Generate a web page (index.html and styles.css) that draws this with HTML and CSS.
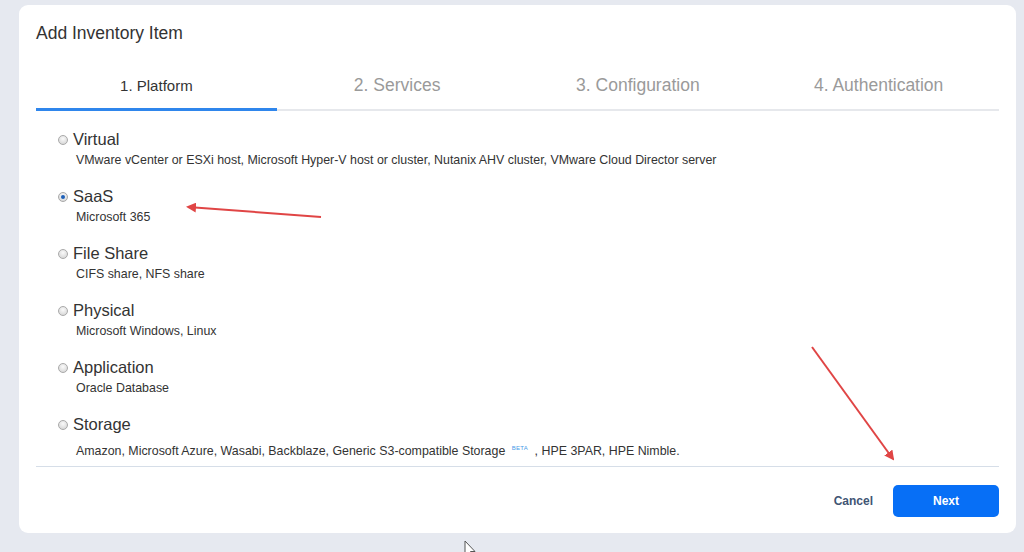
FILE: index.html
```html
<!DOCTYPE html>
<html lang="en">
<head>
    <meta charset="UTF-8">
    <title>Add Inventory Item</title>
    <link rel="stylesheet" href="styles.css">
</head>
<body>
    <div class="dialog">
        <h1 class="dialog-title">Add Inventory Item</h1>

        <div class="steps">
            <div class="step active">1. Platform</div>
            <div class="step">2. Services</div>
            <div class="step">3. Configuration</div>
            <div class="step">4. Authentication</div>
        </div>

        <div class="options">
            <div class="option">
                <div class="option-label"><span class="radio"></span>Virtual</div>
                <div class="option-desc">VMware vCenter or ESXi host, Microsoft Hyper-V host or cluster, Nutanix AHV cluster, VMware Cloud Director server</div>
            </div>
            <div class="option">
                <div class="option-label"><span class="radio checked"></span>SaaS</div>
                <div class="option-desc">Microsoft 365</div>
            </div>
            <div class="option">
                <div class="option-label"><span class="radio"></span>File Share</div>
                <div class="option-desc">CIFS share, NFS share</div>
            </div>
            <div class="option">
                <div class="option-label"><span class="radio"></span>Physical</div>
                <div class="option-desc">Microsoft Windows, Linux</div>
            </div>
            <div class="option">
                <div class="option-label"><span class="radio"></span>Application</div>
                <div class="option-desc">Oracle Database</div>
            </div>
            <div class="option">
                <div class="option-label"><span class="radio"></span>Storage</div>
                <div class="option-desc option-desc-tall">Amazon, Microsoft Azure, Wasabi, Backblaze, Generic S3-compatible Storage <sup class="beta">BETA</sup> , HPE 3PAR, HPE Nimble.</div>
            </div>
        </div>

        <div class="dialog-footer">
            <button class="btn btn-link">Cancel</button>
            <button class="btn btn-primary">Next</button>
        </div>
    </div>

    <!-- annotations drawn over the screenshot -->
    <svg class="annotations" width="1024" height="552" viewBox="0 0 1024 552">
        <defs>
            <marker id="head" viewBox="0 0 10 10" refX="8" refY="5" markerWidth="5" markerHeight="5" orient="auto">
                <path d="M0 0 L10 5 L0 10 z" fill="#e04545"/>
            </marker>
        </defs>
        <line x1="321" y1="217" x2="188" y2="207" stroke="#e04545" stroke-width="2" marker-end="url(#head)"/>
        <line x1="812" y1="347" x2="893" y2="459" stroke="#e04545" stroke-width="2" marker-end="url(#head)"/>
        <path d="M465 541 L465 556 L468.5 552.5 L471 558 L473 557 L470.5 551.5 L475 551.5 Z" fill="#fff" stroke="#555" stroke-width="1"/>
    </svg>
</body>
</html>
```

FILE: styles.css
```css
body {
    margin: 0;
    background: #e6e9f0;
    font-family: "Liberation Sans", Arial, sans-serif;
    color: #333;
    position: relative;
    height: 552px;
    overflow: hidden;
}

.dialog {
    margin: 5px 0 0 19px;
    width: 997px;
    height: 528px;
    box-sizing: border-box;
    padding: 18px 17px 0;
    background: #fff;
    border-radius: 9px;
    display: flex;
    flex-direction: column;
}

.dialog-title {
    margin: 0;
    font-size: 17.5px;
    font-weight: normal;
    line-height: 20px;
    color: #333;
}

/* Wizard steps */
.steps {
    display: flex;
    margin-top: 22px;
    border-bottom: 2px solid #e6e8ec;
}

.step {
    flex: 1;
    text-align: center;
    font-size: 17.5px;
    line-height: 20px;
    color: #9a9a9a;
    padding: 10px 0 13px;
    border-bottom: 3px solid transparent;
    margin-bottom: -2px;
}

.step.active {
    font-size: 15px;
    color: #333;
    padding-top: 11px;
    padding-bottom: 12px;
    border-bottom-color: #2f86ec;
}

/* Platform options */
.options {
    padding: 17px 0 7px 22px;
    border-bottom: 1px solid #d6dee8;
}

.option {
    margin-bottom: 17px;
}

.option:last-child {
    margin-bottom: 0;
}

.option-label {
    display: flex;
    align-items: center;
    font-size: 16.5px;
    line-height: 22px;
    color: #333;
}

.option-desc {
    margin-top: 2px;
    padding-left: 18px;
    font-size: 12.4px;
    line-height: 16px;
    color: #333;
}

.option-desc-tall {
    margin-top: 8px;
}

.beta {
    font-size: 6px;
    line-height: 0;
    color: #4a9be8;
    vertical-align: 5px;
    margin: 0 3px 0 3px;
    letter-spacing: 0.3px;
}

.radio {
    width: 10px;
    height: 10px;
    box-sizing: border-box;
    border-radius: 50%;
    border: 1px solid #a9a9a9;
    background: radial-gradient(circle at 50% 35%, #fafafa, #d0d0d0);
    margin: 1px 5px 0 0;
    flex-shrink: 0;
    position: relative;
}

.radio.checked::after {
    content: "";
    position: absolute;
    left: 2px;
    top: 2px;
    width: 4px;
    height: 4px;
    border-radius: 50%;
    background: #1d5fb7;
}

/* Footer */
.dialog-footer {
    display: flex;
    justify-content: flex-end;
    align-items: center;
    gap: 20px;
    padding-top: 18px;
}

.btn {
    font-family: inherit;
    font-size: 12px;
    font-weight: bold;
    border: none;
    cursor: pointer;
}

.btn-link {
    background: none;
    color: #3f5574;
    padding: 0;
}

.btn-primary {
    width: 106px;
    height: 32px;
    border-radius: 5px;
    background: #076ff6;
    color: #fff;
}

.annotations {
    position: absolute;
    left: 0;
    top: 0;
    pointer-events: none;
}
```
